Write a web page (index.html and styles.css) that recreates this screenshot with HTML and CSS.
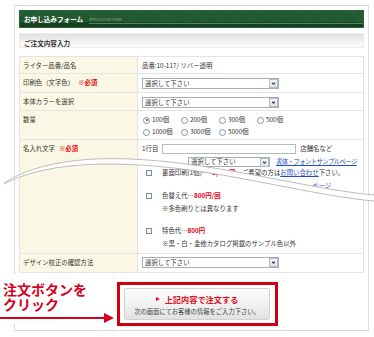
FILE: index.html
```
<!DOCTYPE html>
<html lang="ja">
<head>
    <meta charset="UTF-8">
    <meta name="viewport" content="width=device-width, initial-scale=1.0">
    <title>お申し込みフォーム</title>
    <link rel="stylesheet" href="styles.css">
</head>
<body>
<div class="page">
    <div class="frame">
        <div class="form-head">
            <h1>お申し込みフォーム</h1>
            <span class="head-sub">APPLICATION FORM</span>
        </div>

        <h2 class="section-head">ご注文内容入力</h2>

        <div class="form-table">
            <div class="row row-item">
                <div class="label">ライター品番/品名</div>
                <div class="field field-text">品番:10-117/ リバー透明</div>
            </div>
            <div class="row row-color">
                <div class="label">印刷色（文字色）<span class="required">※必須</span></div>
                <div class="field">
                    <div class="select"><span>選択して下さい</span><span class="select-arrow"><svg viewBox="0 0 9 9"><path d="M2.5 3.5 L4.5 5.5 L6.5 3.5"/></svg></span></div>
                </div>
            </div>
            <div class="row row-body">
                <div class="label">本体カラーを選択</div>
                <div class="field">
                    <div class="select"><span>選択して下さい</span><span class="select-arrow"><svg viewBox="0 0 9 9"><path d="M2.5 3.5 L4.5 5.5 L6.5 3.5"/></svg></span></div>
                </div>
            </div>
            <div class="row row-qty">
                <div class="label">数量</div>
                <div class="field">
                    <div class="radios">
                        <span class="radio checked"><i></i>100個</span>
                        <span class="radio"><i></i>200個</span>
                        <span class="radio"><i></i>300個</span>
                        <span class="radio"><i></i>500個</span>
                        <span class="radio"><i></i>1000個</span>
                        <span class="radio"><i></i>3000個</span>
                        <span class="radio"><i></i>5000個</span>
                    </div>
                </div>
            </div>
            <div class="row row-name">
                <div class="label">名入れ文字<span class="required">※必須</span></div>
                <div class="field">
                    <div class="name-line">
                        <span>1行目</span>
                        <span class="text-input"></span>
                        <span>店舗名など</span>
                    </div>
                    <div class="font-line">
                        <div class="select select-font"><span>選択して下さい</span><span class="select-arrow"><svg viewBox="0 0 9 9"><path d="M2.5 3.5 L4.5 5.5 L6.5 3.5"/></svg></span></div>
                        <a class="link" href="#">書体・フォントサンプルページ</a>
                    </div>
                    <div class="option option-back"><span class="check"></span>裏面印刷(1個)…<b class="price">+1,000円</b>…ご希望の方は<a class="link" href="#">お問い合わせ</a>下さい。</div>
                    <div class="page-bit"><a class="link" href="#">ページ</a></div>
                    <div class="option option-swap"><span class="check"></span>色替え代…<b class="price">800円/回</b></div>
                    <div class="note">※多色刷りとは異なります</div>
                    <div class="option option-spot"><span class="check"></span>特色代…<b class="price">800円</b></div>
                    <div class="note">※黒・白・金他カタログ掲載のサンプル色以外</div>
                </div>
            </div>
            <div class="row row-proof">
                <div class="label">デザイン校正の確認方法</div>
                <div class="field">
                    <div class="select"><span>選択して下さい</span><span class="select-arrow"><svg viewBox="0 0 9 9"><path d="M2.5 3.5 L4.5 5.5 L6.5 3.5"/></svg></span></div>
                </div>
            </div>
        </div>

        <div class="submit-area">
            <div class="submit-frame">
                <button class="submit-btn" type="button">
                    <span class="submit-main"><span class="tri"></span>上記内容で注文する</span>
                    <span class="submit-sub">次の画面にてお客様の情報をご入力下さい。</span>
                </button>
            </div>
        </div>
    </div>

    <!-- torn page effect across the long field -->
    <svg class="tear" viewBox="0 140 374 70" width="374" height="70">
        <path class="tear-gap" d="M4,183 C40,160 100,152 190,164.5 C260,174 320,190 374,195 L374,201 C320,196 260,180 190,170 C100,158 40,165 4,184 Z"/>
        <path class="tear-edge" d="M4,183 C40,160 100,152 190,164.5 C260,174 320,190 374,195"/>
        <path class="tear-edge" d="M4,184 C40,165 100,158 190,170 C260,180 320,196 374,201"/>
    </svg>

    <div class="callout">注文ボタンを<br>クリック</div>
    <div class="callout-arrow"></div>
</div>
</body>
</html>
```

FILE: styles.css
```
body {
    margin: 0;
    background: #fff;
    font-family: "Noto Sans CJK JP", "Noto Sans", sans-serif;
    color: #333;
}

.page {
    position: relative;
    width: 374px;
    height: 337px;
    overflow: hidden;
}

.frame {
    width: 355px;
    margin: 5px 0 0 14px;
    padding: 4px 4px 4px 4px;
    border: 1px solid #dcdcdc;
    box-sizing: border-box;
}

/* green title bar */
.form-head {
    display: flex;
    align-items: center;
    height: 18px;
    padding-left: 4px;
    box-sizing: border-box;
    border: 1px solid #2b6238;
    background:
        repeating-linear-gradient(45deg, rgba(255, 255, 255, 0.04) 0 1px, transparent 1px 3px),
        linear-gradient(#215a30 0, #1f552d 11px, #163d20 12px, #133a1d 100%);
}

.form-head h1 {
    margin: 0;
    font-size: 6.6px;
    font-weight: bold;
    color: #fff;
    line-height: 8px;
}

.head-sub {
    flex: 1;
    margin-left: 6px;
    padding-bottom: 1px;
    margin-top: 3px;
    border-bottom: 1px solid #4d8659;
    font-size: 3.2px;
    letter-spacing: 0.2px;
    color: #9db8a2;
    line-height: 4px;
}

.section-head {
    margin: 5px 0 0;
    height: 15px;
    padding: 5px 0 0 4px;
    box-sizing: border-box;
    border: 1px solid #ececec;
    background: linear-gradient(#dfdfdf, #f6f6f6 70%, #fbfbfb);
    font-size: 6.6px;
    font-weight: bold;
    line-height: 8px;
    color: #333;
}

/* form rows */
.form-table {
    margin-top: 8px;
    border: 1px solid #e4e4e4;
}

.row {
    display: grid;
    grid-template-columns: 118px 1fr;
    border-bottom: 1px solid #e4e4e4;
    box-sizing: border-box;
    font-size: 6.4px;
    line-height: 8px;
}

.row:last-child {
    border-bottom: none;
}

.row-item { height: 17px; }
.row-color { height: 19px; }
.row-body { height: 18px; }
.row-qty { height: 29px; }
.row-name { height: 114px; }
.row-proof { height: 18px; }

.label {
    background: #faf8e4;
    border-right: 1px solid #e4e4e4;
    padding: 5px 0 0 3px;
    color: #333;
}

.required {
    margin-left: 4px;
    color: #e60012;
    font-weight: bold;
}

.field {
    padding: 4px 0 0 4px;
}

.field-text {
    padding-top: 5px;
}

.row-proof .field {
    padding-top: 3px;
}

.select {
    display: flex;
    align-items: center;
    justify-content: space-between;
    width: 137px;
    height: 11px;
    box-sizing: border-box;
    border: 1px solid #a7aeb8;
    background: #fff;
    padding-left: 2px;
    font-size: 6.4px;
    line-height: 8px;
}

.select-arrow {
    width: 9px;
    height: 9px;
    box-sizing: border-box;
    border: 1px solid #b4bcc8;
    background: linear-gradient(#f4f6f9, #dfe3ea);
}

.select-arrow svg {
    display: block;
    width: 7px;
    height: 7px;
}

.select-arrow path {
    fill: none;
    stroke: #333;
    stroke-width: 1.3;
}

/* quantity radios */
.radios {
    display: grid;
    grid-template-columns: repeat(4, 38px);
    row-gap: 4px;
    padding: 1px 0 0 1px;
}

.radio {
    display: flex;
    align-items: center;
    gap: 2px;
}

.radio i {
    width: 5px;
    height: 5px;
    border: 1px solid #7f93b3;
    border-radius: 50%;
    background: #fff;
    position: relative;
}

.radio.checked i::after {
    content: "";
    position: absolute;
    left: 1.5px;
    top: 1.5px;
    width: 2px;
    height: 2px;
    border-radius: 50%;
    background: #233a66;
}

/* name field */
.row-name .field {
    padding-top: 3px;
}

.name-line {
    display: flex;
    align-items: center;
    height: 11px;
}

.text-input {
    width: 134px;
    height: 10px;
    margin: 0 4px 0 4px;
    box-sizing: border-box;
    border: 1px solid #b9b9b9;
    background: #fff;
}

.font-line {
    display: flex;
    align-items: center;
    margin-top: 3px;
    padding-left: 46px;
    white-space: nowrap;
}

.select-font {
    width: 82px;
    height: 10px;
    flex-shrink: 0;
}

.font-line .link {
    margin-left: 6px;
    letter-spacing: -0.6px;
}

.link {
    color: #1f4fbf;
    text-decoration: underline;
}

.option {
    display: flex;
    align-items: center;
    height: 8px;
    white-space: nowrap;
}

.option-back { margin-top: 2px; }
.option-swap { margin-top: 1px; }
.option-spot { margin-top: 14px; }

.check {
    width: 6px;
    height: 6px;
    margin: 0 10px 0 4px;
    box-sizing: border-box;
    border: 1px solid #7d8aa3;
    background: #f7f8fb;
}

.price {
    color: #e60012;
    font-weight: bold;
}

.page-bit {
    margin-top: 5px;
    height: 8px;
    padding-left: 170px;
}

.note {
    margin-top: 5px;
    padding-left: 20px;
    white-space: nowrap;
}

.page-bit + .option-swap {
    margin-top: 2px;
}

/* torn page overlay */
.tear {
    position: absolute;
    left: 0;
    top: 140px;
}

.tear-gap {
    fill: #fff;
}

.tear-edge {
    fill: none;
    stroke: #b4b4b4;
    stroke-width: 0.9;
}

/* submit button */
.submit-area {
    margin-top: 9px;
    padding-left: 98px;
}

.submit-frame {
    width: 161px;
    height: 44px;
    box-sizing: border-box;
    border: 3px solid #cc0010;
    padding: 3px 5px 3px 4px;
}

.submit-btn {
    display: flex;
    flex-direction: column;
    align-items: center;
    width: 146px;
    height: 32px;
    margin: 0;
    padding: 5px 0 0;
    box-sizing: border-box;
    border: 1px solid #d2d2d2;
    border-radius: 2px;
    background: linear-gradient(#fdfdfd, #f1f1f1 50%, #e2e2e2);
    font-family: "Noto Sans CJK JP", "Noto Sans", sans-serif;
}

.submit-main {
    display: flex;
    align-items: center;
    font-size: 8.2px;
    line-height: 10px;
    color: #e0101e;
    font-weight: bold;
}

.tri {
    width: 0;
    height: 0;
    margin-right: 5px;
    border-left: 4px solid #e0101e;
    border-top: 2.5px solid transparent;
    border-bottom: 2.5px solid transparent;
}

.submit-sub {
    margin-top: 4px;
    font-size: 6.3px;
    line-height: 8px;
    color: #444;
}

/* red annotation */
.callout {
    position: absolute;
    left: 0;
    top: 274px;
    width: 92px;
    height: 50px;
    padding: 8px 0 0 3px;
    box-sizing: border-box;
    background: #fff;
    color: #d6001c;
    font-size: 14px;
    line-height: 15px;
    font-weight: bold;
}

.callout-arrow {
    position: absolute;
    left: 0;
    top: 317px;
    width: 106px;
    height: 2px;
    background: #d6001c;
}

.callout-arrow::after {
    content: "";
    position: absolute;
    left: 104px;
    top: -4px;
    border-left: 10px solid #d6001c;
    border-top: 5px solid transparent;
    border-bottom: 5px solid transparent;
}
```
